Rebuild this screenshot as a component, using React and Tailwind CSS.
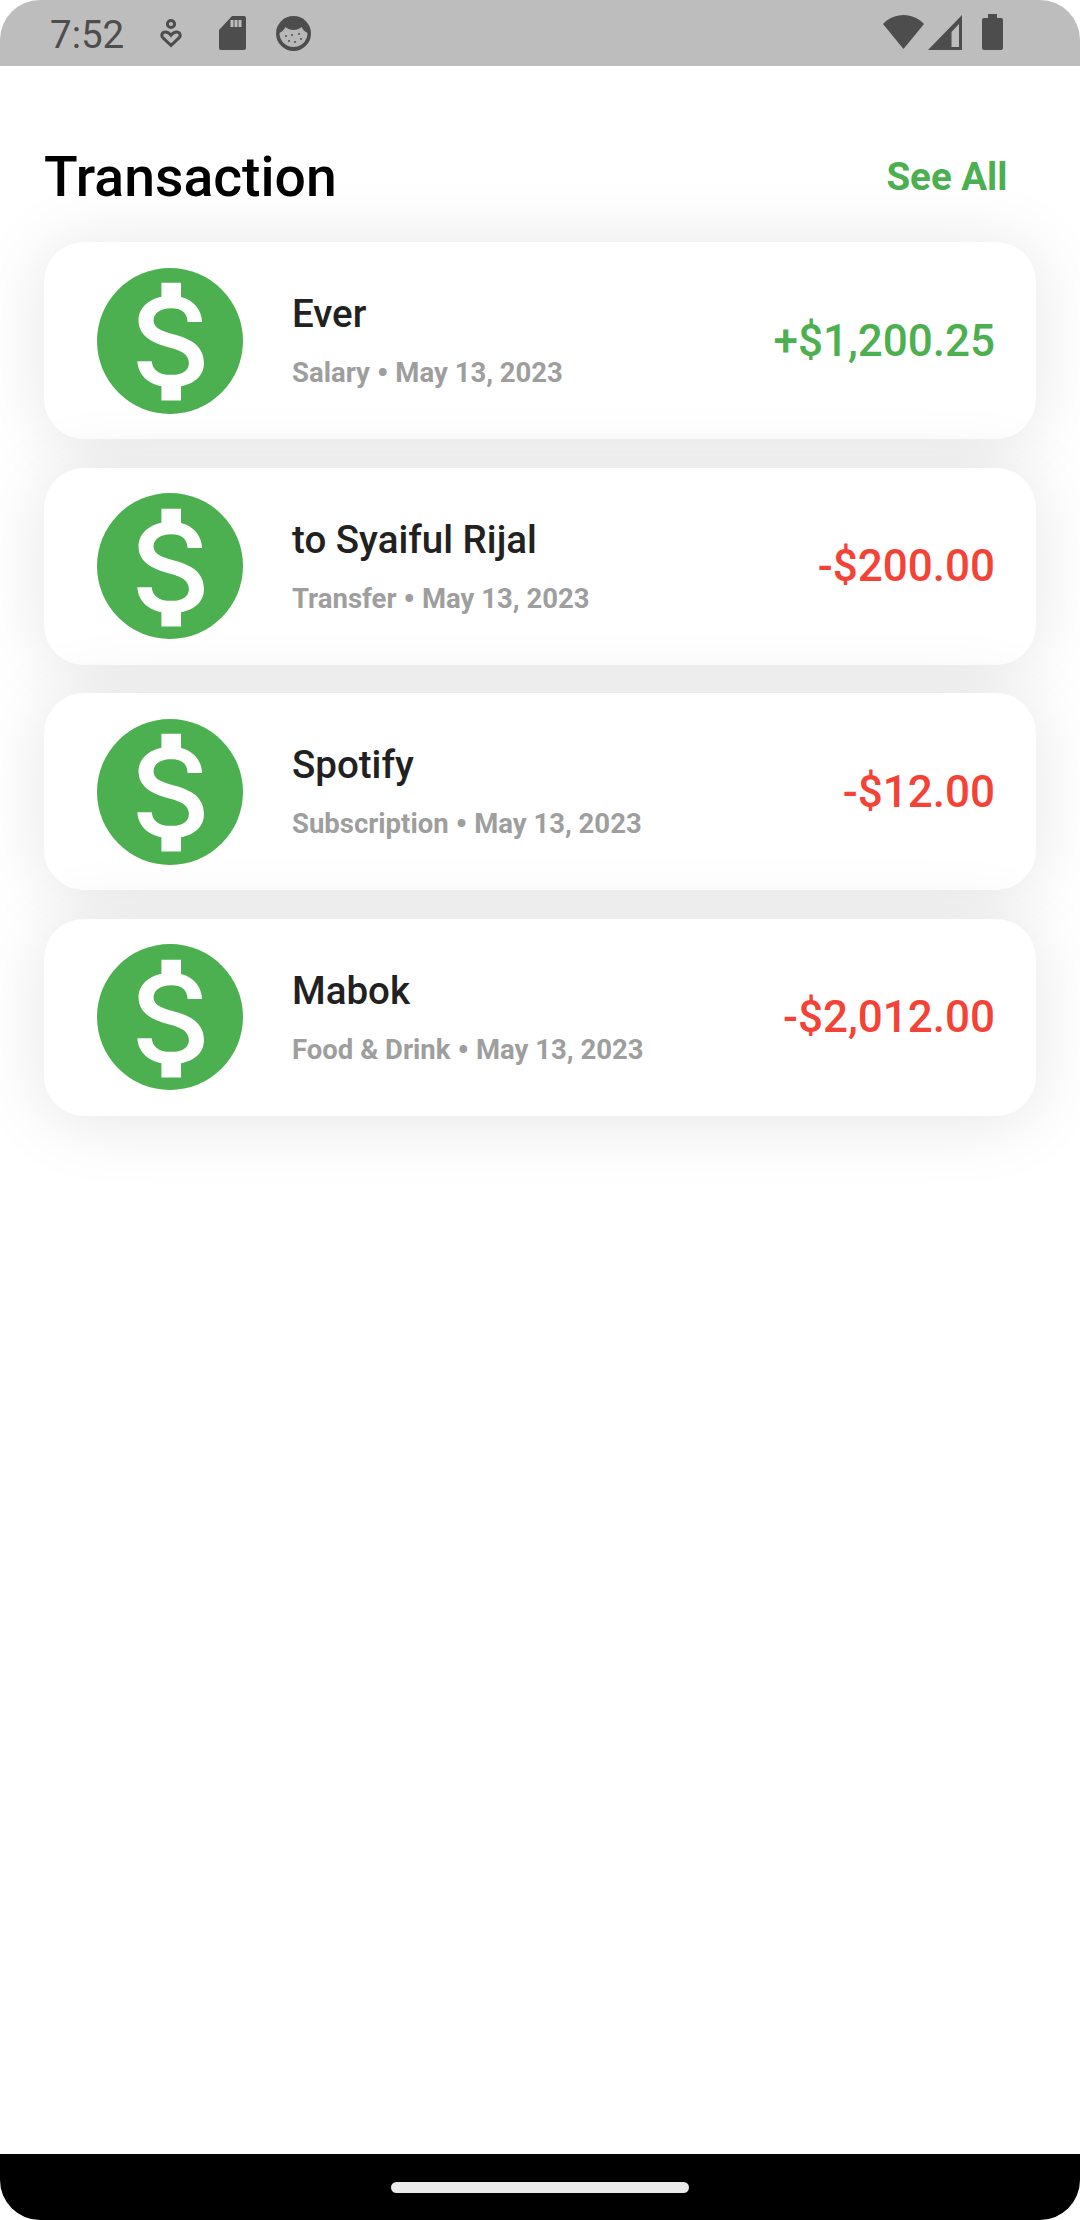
import React from 'react';

const transactions = [
  { name: 'Ever', category: 'Salary', date: 'May 13, 2023', amount: '+$1,200.25', income: true },
  { name: 'to Syaiful Rijal', category: 'Transfer', date: 'May 13, 2023', amount: '-$200.00' },
  { name: 'Spotify', category: 'Subscription', date: 'May 13, 2023', amount: '-$12.00' },
  { name: 'Mabok', category: 'Food & Drink', date: 'May 13, 2023', amount: '-$2,012.00' },
];

const DollarIcon = () => (
  <div className="flex h-[146px] w-[146px] shrink-0 items-center justify-center rounded-full bg-[#4caf50]">
    <svg width="157" height="157" viewBox="0 0 24 24" className="shrink-0 translate-x-[4px] translate-y-[1px]" fill="#ffffff">
      <path d="M11.8 10.9c-2.27-.59-3-1.2-3-2.15 0-1.09 1.01-1.85 2.7-1.85 1.78 0 2.44.85 2.5 2.1h2.21c-.07-1.72-1.12-3.3-3.21-3.81V3h-3v2.16c-1.94.42-3.5 1.68-3.5 3.61 0 2.31 1.91 3.46 4.7 4.13 2.5.6 3 1.48 3 2.41 0 .69-.49 1.79-2.7 1.79-2.06 0-2.87-.92-2.98-2.1h-2.2c.12 2.19 1.76 3.42 3.68 3.83V21h3v-2.15c1.95-.37 3.5-1.5 3.5-3.55 0-2.84-2.43-3.81-4.7-4.4z" />
    </svg>
  </div>
);

const StatusBar = () => (
  <div className="flex h-[66px] shrink-0 items-center rounded-t-[40px] bg-[#bdbdbd] pl-[50px] pr-[77px] text-[#4d4d4d]">
    <span className="mt-[5px] w-[110px] text-[38.5px] leading-none">7:52</span>
    {/* left side notification icons */}
    <svg width="22" height="30" viewBox="0 0 22 30" fill="none" stroke="#4d4d4d" strokeWidth="3">
      <circle cx="11" cy="6" r="3.6" />
      <path d="M11 27.5 2.8 19.6c-2-2.2-.6-5.6 2.6-5.6 2.3 0 4.4 1.6 5.6 3.2 1.2-1.6 3.300-3.2 5.600-3.2 3.2 0 4.600 3.400 2.600 5.600z" />
    </svg>
    <svg width="27" height="34" viewBox="0 0 27 34" className="ml-[37px]" fill="#4d4d4d">
      <path d="M13 0h12a2 2 0 0 1 2 2v30a2 2 0 0 1-2 2H2a2 2 0 0 1-2-2V14z" />
      <path d="M11.500 4h3v7h-3zM15.500 4h3v7h-3zM19.500 4h3v7h-3z" fill="#bdbdbd" />
    </svg>
    <svg width="35" height="35" viewBox="0 0 35 35" className="ml-[30px]">
      <circle cx="17.500" cy="17.500" r="17.500" fill="#4d4d4d" />
      <path d="M3.500 17c3-1 5-4.500 6-6 2 2 5 3 8 3s6-1 8-3c1 1.500 3 5 6 6a14 14 0 0 1-28 0z" fill="#b8b8b8" />
      <g fill="#4d4d4d">
        <circle cx="10" cy="20" r="1" />
        <circle cx="16" cy="19" r="1" />
        <circle cx="23" cy="18" r="1" />
        <circle cx="13" cy="25" r="1" />
        <circle cx="19" cy="26" r="1" />
        <circle cx="25" cy="23" r="1" />
      </g>
    </svg>
    <div className="flex-1" />
    {/* wifi, signal, battery */}
    <div className="mb-[2px] flex items-center">
      <svg width="41" height="35" viewBox="0 0 41 35" fill="#4d4d4d">
        <path d="M0 9C5 3.500 12.500 0 20.500 0S36 3.500 41 9L20.500 34z" />
      </svg>
      <svg width="34" height="35" viewBox="0 0 34 35" className="ml-[4px]" fill="#4d4d4d">
        <path d="M34 0v35H0zM31 9l-7.500 8v15H31z" fillRule="evenodd" />
      </svg>
      <svg width="21" height="36" viewBox="0 0 21 36" className="ml-[20px]" fill="#4d4d4d">
        <path d="M6 0h9v4h4a2 2 0 0 1 2 2v28a2 2 0 0 1-2 2H2a2 2 0 0 1-2-2V6a2 2 0 0 1 2-2h4z" />
      </svg>
    </div>
  </div>
);

const TransactionRow = ({ item }) => (
  <div className="flex h-[197px] items-center rounded-[40px] bg-white pl-[53px] pr-[41px] shadow-[0_4px_72px_rgba(0,0,0,0.105)]">
    <DollarIcon />
    <div className="ml-[49px] flex-1">
      <div className="text-[38.5px] font-medium leading-[44px] text-[#212121]">{item.name}</div>
      <div className="mt-[20px] text-[27.5px] font-bold leading-[32px] text-[#9e9e9e]">
        {item.category} <span className="align-[-2px] text-[33px] leading-none">•</span> {item.date}
      </div>
    </div>
    <div className={`text-[44px] font-medium ${item.income ? 'text-[#4caf50]' : 'text-[#f44336]'}`}>
      {item.amount}
    </div>
  </div>
);

export default function App() {
  return (
    <div className="flex h-[2220px] w-[1080px] flex-col overflow-hidden bg-white font-['Roboto',sans-serif]">
      <StatusBar />

      <div className="flex-1 px-[44px]">
        {/* Header */}
        <div className="flex h-[176px] items-center justify-between pt-[48px] pr-[28.500px]">
          <h1 className="text-[55.3px] font-medium text-black">Transaction</h1>
          <button className="mb-[2px] text-[38.500px] font-bold text-[#4caf50]">See All</button>
        </div>

        {/* Transaction list */}
        <div className="flex flex-col gap-[28.500px]">
          {transactions.map((item) => (
            <TransactionRow key={item.name} item={item} />
          ))}
        </div>
      </div>

      {/* Nav bar */}
      <div className="flex h-[66px] shrink-0 items-center justify-center rounded-b-[40px] bg-black">
        <div className="h-[11px] w-[298px] rounded-full bg-[#ebebeb]" />
      </div>
    </div>
  );
}
